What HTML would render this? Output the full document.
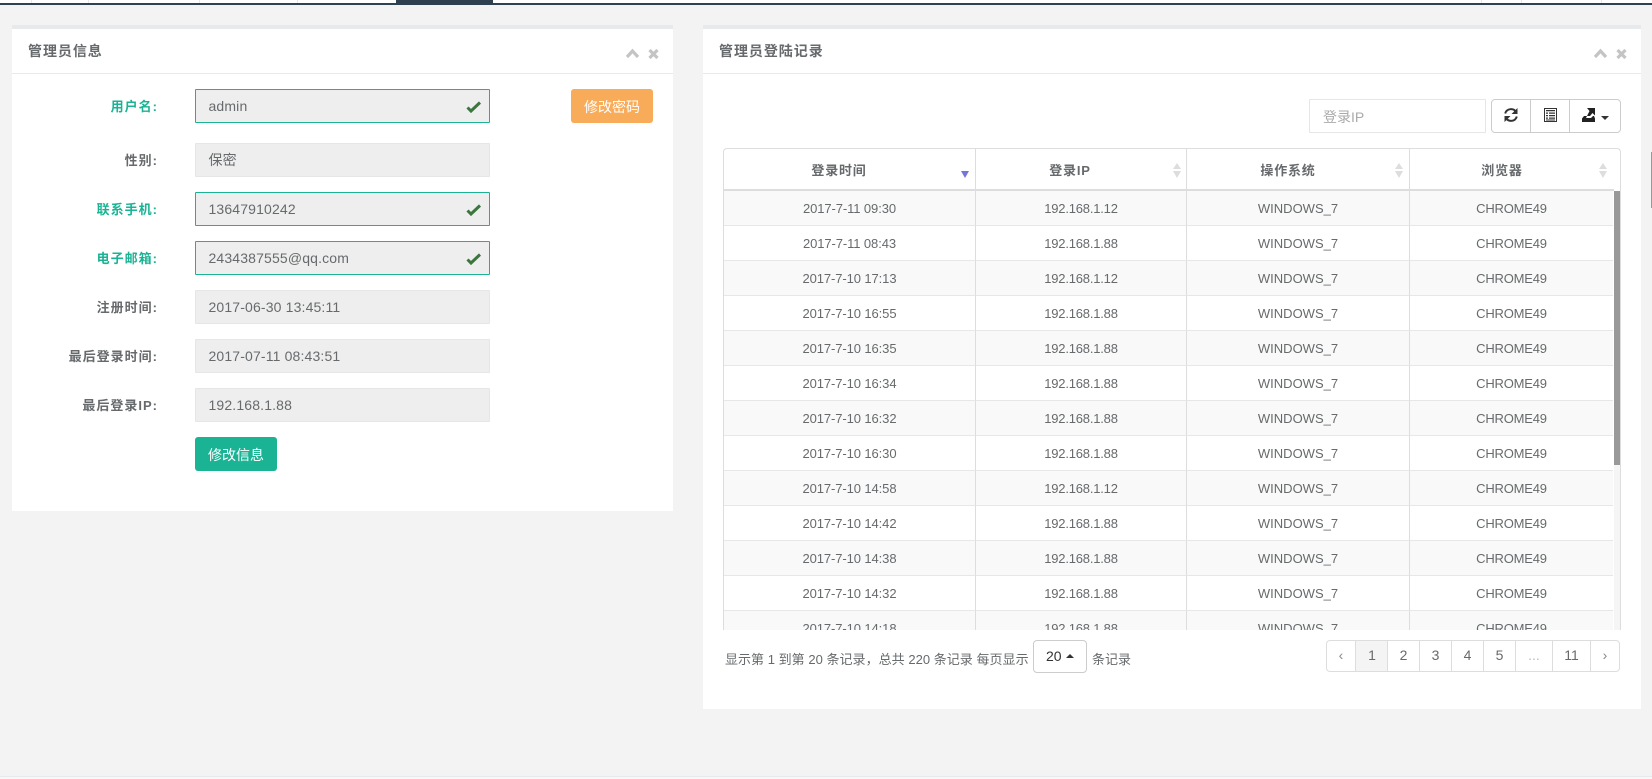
<!DOCTYPE html>
<html lang="zh">
<head>
<meta charset="utf-8">
<title>管理员信息</title>
<style>
*{box-sizing:border-box}
html,body{margin:0;padding:0}
body{position:relative;width:1652px;height:779px;overflow:hidden;background:#f3f3f4;color:#676a6c;font-family:"Liberation Sans","Noto Sans CJK SC",sans-serif;font-size:13px}
.a{position:absolute}
.panel{position:absolute;background:#fff;border-top:4px solid #e7eaec}
.title{position:absolute;top:12px;font-size:14px;font-weight:bold;line-height:20px;letter-spacing:.95px;white-space:nowrap}
.lab{position:absolute;left:20px;width:138px;margin-top:1px;text-align:right;font-size:13px;font-weight:bold;line-height:20px;letter-spacing:1px;white-space:nowrap}
.g{color:#1ab394}
.inp{position:absolute;left:195px;width:295px;height:34px;background:#eee;border:1px solid #e5e6e7;border-radius:1px;padding-left:12.5px;font-size:14px;line-height:32px;letter-spacing:.15px;white-space:nowrap}
.inp.ok{border-color:#1ab394}
.btn{position:absolute;height:34px;width:82px;border-radius:3px;color:#fff;font-size:14px;line-height:36px;text-align:center;white-space:nowrap}
table{border-collapse:separate;border-spacing:0;table-layout:fixed}
td{height:35px;padding:2px 0 0;text-align:center;border-bottom:1px solid #e7e7e7;border-right:1px solid #ddd;font-size:13px;line-height:20px;letter-spacing:-.2px;color:#676a6c;white-space:nowrap}
td:first-child{letter-spacing:-.1px}
td:nth-child(3){letter-spacing:0}
td:last-child{border-right:0}
tr:nth-child(odd) td{background:#f9f9f9}
.th{position:absolute;top:161px;font-size:13px;font-weight:bold;line-height:20px;letter-spacing:.8px;text-align:center;white-space:nowrap}
.pg{position:absolute;top:640px;height:32px;border-left:1px solid #ddd;text-align:center;line-height:31px;font-size:14px;color:#676a6c}
.info{position:absolute;font-size:13px;line-height:20px;white-space:nowrap}
</style>
</head>
<body>
<div class="a" style="left:0;top:0;width:1652px;height:3px;background:#fff"></div>
<div class="a" style="left:31px;top:0;width:1px;height:3px;background:#e7eaec"></div>
<div class="a" style="left:88px;top:0;width:1px;height:3px;background:#e7eaec"></div>
<div class="a" style="left:199px;top:0;width:1px;height:3px;background:#e7eaec"></div>
<div class="a" style="left:297px;top:0;width:1px;height:3px;background:#e7eaec"></div>
<div class="a" style="left:1481px;top:0;width:1px;height:3px;background:#e7eaec"></div>
<div class="a" style="left:1521px;top:0;width:1px;height:3px;background:#e7eaec"></div>
<div class="a" style="left:1601px;top:0;width:1px;height:3px;background:#e7eaec"></div>
<div class="a" style="left:0;top:3px;width:1652px;height:2px;background:#2f4050"></div>
<div class="a" style="left:396px;top:0;width:97px;height:5px;background:#2f4050"></div>
<div class="a" style="left:1651px;top:152px;width:1px;height:56px;background:#999"></div>
<div class="a" style="left:0;top:776px;width:1652px;height:3px;background:#f7f7f7;border-top:1px solid #e7eaec"></div>

<!-- left panel -->
<div class="panel" style="left:12px;top:25px;width:661px;height:486px"></div>
<div class="a" style="left:12px;top:73px;width:661px;height:1px;background:#e7eaec"></div>
<div class="title" style="left:28px;top:41px">管理员信息</div>
<svg class="a" style="left:620px;top:44px" width="45" height="18" viewBox="0 0 45 18"><path d="M7 13l5.500-6 5.500 6" fill="none" stroke="#c4c4c4" stroke-width="3.200"/><path d="M29.500 6l8 8M37.500 6l-8 8" fill="none" stroke="#c4c4c4" stroke-width="3.200"/></svg>

<div class="lab g" style="top:96px">用户名:</div>
<div class="inp ok" style="top:89px">admin</div>
<svg class="a" style="left:466px;top:100px" width="16" height="14" viewBox="0 0 16 14"><path d="M1.500 7.500l3.500 3.500L14 2.500" fill="none" stroke="#3c763d" stroke-width="3"/></svg>
<div class="btn" style="left:571px;top:89px;background:#f8ac59">修改密码</div>

<div class="lab" style="top:150px">性别:</div>
<div class="inp" style="top:143px">保密</div>

<div class="lab g" style="top:199px">联系手机:</div>
<div class="inp ok" style="top:192px">13647910242</div>
<svg class="a" style="left:466px;top:203px" width="16" height="14" viewBox="0 0 16 14"><path d="M1.500 7.500l3.500 3.500L14 2.500" fill="none" stroke="#3c763d" stroke-width="3"/></svg>

<div class="lab g" style="top:248px">电子邮箱:</div>
<div class="inp ok" style="top:241px">2434387555@qq.com</div>
<svg class="a" style="left:466px;top:252px" width="16" height="14" viewBox="0 0 16 14"><path d="M1.500 7.500l3.500 3.500L14 2.500" fill="none" stroke="#3c763d" stroke-width="3"/></svg>

<div class="lab" style="top:297px">注册时间:</div>
<div class="inp" style="top:290px">2017-06-30 13:45:11</div>
<div class="lab" style="top:346px">最后登录时间:</div>
<div class="inp" style="top:339px">2017-07-11 08:43:51</div>
<div class="lab" style="top:395px">最后登录IP:</div>
<div class="inp" style="top:388px">192.168.1.88</div>
<div class="btn" style="left:195px;top:437px;background:#1ab394">修改信息</div>

<!-- right panel -->
<div class="panel" style="left:703px;top:25px;width:938px;height:684px"></div>
<div class="a" style="left:703px;top:73px;width:938px;height:1px;background:#e7eaec"></div>
<div class="title" style="left:719px;top:41px">管理员登陆记录</div>
<svg class="a" style="left:1588px;top:44px" width="45" height="18" viewBox="0 0 45 18"><path d="M7 13l5.500-6 5.500 6" fill="none" stroke="#c4c4c4" stroke-width="3.200"/><path d="M29.500 6l8 8M37.500 6l-8 8" fill="none" stroke="#c4c4c4" stroke-width="3.200"/></svg>

<div class="a" style="left:1309px;top:99px;width:177px;height:34px;border:1px solid #e5e6e7;border-radius:1px;padding-left:13px;font-size:14px;line-height:34px;color:#aaa">登录IP</div>
<div class="a" style="left:1491px;top:99px;width:130px;height:34px;border:1px solid #ccc;border-radius:4px"></div>
<div class="a" style="left:1530px;top:99px;width:1px;height:34px;background:#ccc"></div>
<div class="a" style="left:1569px;top:99px;width:1px;height:34px;background:#ccc"></div>
<svg class="a" style="left:1503px;top:107px" width="16" height="16" viewBox="0 0 16 16"><path d="M13.200 5.200A6 6 0 0 0 2.200 6.500" fill="none" stroke="#333" stroke-width="2"/><path d="M2.800 10.800A6 6 0 0 0 13.800 9.500" fill="none" stroke="#333" stroke-width="2"/><path d="M14.500 1v6h-6zM1.500 15V9h6z" fill="#333"/></svg>
<svg class="a" style="left:1544px;top:108px" width="13" height="14" viewBox="0 0 13 14"><path d="M.5.500h12v13H.500z" fill="#fff" stroke="#333"/><path d="M2 2h9v1.200H2zM2 4.500h2v1.200H2zM5 4.500h6v1.200H5zM2 7h2v1.200H2zM5 7h6v1.200H5zM2 9.500h2v1.200H2zM5 9.500h6v1.200H5zM2 11.500h9v1H2z" fill="#333"/></svg>
<svg class="a" style="left:1582px;top:108px" width="14" height="14" viewBox="0 0 14 14"><path d="M0 14v-3.500L2 8h3l-1 2h5l2-2h1l1 2.500V14z" fill="#222"/><path d="M5 0h8v7.500L10.500 5 8 8H5l2.500-5z" fill="#222"/></svg>
<div class="a" style="left:1601px;top:116px;border-left:4px solid transparent;border-right:4px solid transparent;border-top:4px solid #333"></div>

<!-- table -->
<div class="a" style="left:723px;top:148px;width:898px;height:482px;border:1px solid #ddd;border-bottom:0;border-radius:4px 4px 0 0"></div>
<div class="a" style="left:724px;top:189px;width:890px;height:2px;background:#ddd"></div>
<div class="a" style="left:975px;top:149px;width:1px;height:40px;background:#ddd"></div>
<div class="a" style="left:1186px;top:149px;width:1px;height:40px;background:#ddd"></div>
<div class="a" style="left:1409px;top:149px;width:1px;height:40px;background:#ddd"></div>
<div class="th" style="left:779px;width:120px">登录时间</div>
<div class="th" style="left:1010px;width:120px">登录IP</div>
<div class="th" style="left:1228px;width:120px">操作系统</div>
<div class="th" style="left:1442px;width:120px">浏览器</div>
<svg class="a" style="left:961px;top:170px" width="9" height="9" viewBox="0 0 9 9"><path d="M0 1h8L4 8z" fill="#7676d8"/></svg>
<svg class="a" style="left:1172px;top:162px" width="10" height="17" viewBox="0 0 10 17"><path d="M5 1l4 6H1zM1 9h8l-4 7z" fill="#ddd"/></svg>
<svg class="a" style="left:1394px;top:162px" width="10" height="17" viewBox="0 0 10 17"><path d="M5 1l4 6H1zM1 9h8l-4 7z" fill="#ddd"/></svg>
<svg class="a" style="left:1598px;top:162px" width="10" height="17" viewBox="0 0 10 17"><path d="M5 1l4 6H1zM1 9h8l-4 7z" fill="#ddd"/></svg>

<div class="a" style="left:724px;top:191px;width:896px;height:439px;overflow:hidden">
<table style="width:889px">
<colgroup><col style="width:252px"><col style="width:211px"><col style="width:223px"><col style="width:203px"></colgroup>
<tbody>
<tr><td>2017-7-11 09:30</td><td>192.168.1.12</td><td>WINDOWS_7</td><td>CHROME49</td></tr>
<tr><td>2017-7-11 08:43</td><td>192.168.1.88</td><td>WINDOWS_7</td><td>CHROME49</td></tr>
<tr><td>2017-7-10 17:13</td><td>192.168.1.12</td><td>WINDOWS_7</td><td>CHROME49</td></tr>
<tr><td>2017-7-10 16:55</td><td>192.168.1.88</td><td>WINDOWS_7</td><td>CHROME49</td></tr>
<tr><td>2017-7-10 16:35</td><td>192.168.1.88</td><td>WINDOWS_7</td><td>CHROME49</td></tr>
<tr><td>2017-7-10 16:34</td><td>192.168.1.88</td><td>WINDOWS_7</td><td>CHROME49</td></tr>
<tr><td>2017-7-10 16:32</td><td>192.168.1.88</td><td>WINDOWS_7</td><td>CHROME49</td></tr>
<tr><td>2017-7-10 16:30</td><td>192.168.1.88</td><td>WINDOWS_7</td><td>CHROME49</td></tr>
<tr><td>2017-7-10 14:58</td><td>192.168.1.12</td><td>WINDOWS_7</td><td>CHROME49</td></tr>
<tr><td>2017-7-10 14:42</td><td>192.168.1.88</td><td>WINDOWS_7</td><td>CHROME49</td></tr>
<tr><td>2017-7-10 14:38</td><td>192.168.1.88</td><td>WINDOWS_7</td><td>CHROME49</td></tr>
<tr><td>2017-7-10 14:32</td><td>192.168.1.88</td><td>WINDOWS_7</td><td>CHROME49</td></tr>
<tr><td>2017-7-10 14:18</td><td>192.168.1.88</td><td>WINDOWS_7</td><td>CHROME49</td></tr>
</tbody>
</table>
</div>
<div class="a" style="left:1614px;top:191px;width:6px;height:439px;background:#f5f5f5"></div>
<div class="a" style="left:1614px;top:191px;width:6px;height:274px;background:#999"></div>

<!-- footer -->
<div class="info" style="left:725px;top:650px;letter-spacing:.03px">显示第 1 到第 20 条记录，总共 220 条记录 每页显示</div>
<div class="a" style="left:1033px;top:640px;width:54px;height:33px;border:1px solid #ccc;border-radius:4px;font-size:14px;line-height:31px;color:#333;padding-left:12px">20</div>
<div class="a" style="left:1066px;top:654px;border-left:4px solid transparent;border-right:4px solid transparent;border-bottom:4px solid #333"></div>
<div class="info" style="left:1092px;top:650px">条记录</div>

<div class="a" style="left:1326px;top:640px;width:294px;height:32px;border:1px solid #ddd;border-radius:4px"></div>
<div class="a" style="left:1356px;top:641px;width:32px;height:30px;background:#f4f4f4"></div>
<div class="pg" style="left:1327px;width:28px;border-left:0;color:#888">‹</div>
<div class="pg" style="left:1355px;width:33px">1</div>
<div class="pg" style="left:1387px;width:32px">2</div>
<div class="pg" style="left:1419px;width:32px">3</div>
<div class="pg" style="left:1451px;width:32px">4</div>
<div class="pg" style="left:1483px;width:32px">5</div>
<div class="pg" style="left:1515px;width:37px;color:#bbb">...</div>
<div class="pg" style="left:1552px;width:38px">11</div>
<div class="pg" style="left:1590px;width:29px;color:#888">›</div>
</body>
</html>
